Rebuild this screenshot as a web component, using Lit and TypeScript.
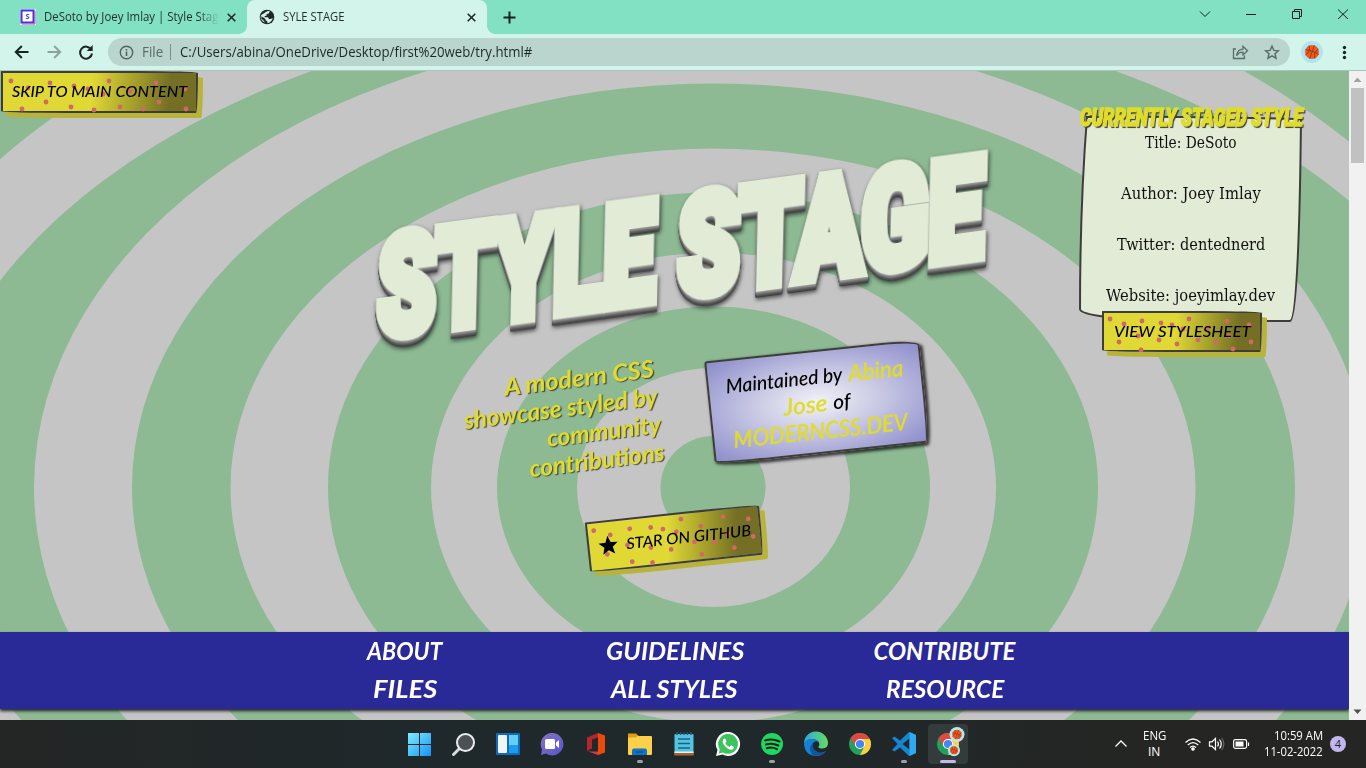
import { LitElement, html, css, svg } from "lit";
import { customElement, property } from "lit/decorators.js";
import { styleMap } from "lit/directives/style-map.js";

/** One line of text, condensed or stretched to a given width. */
@customElement("fit-text")
class FitText extends LitElement {
  @property({ type: Number }) w = 100;
  static styles = css`
    :host { display: inline-block; white-space: nowrap; flex: none; text-align: left; }
    .t { display: inline-block; transform-origin: 0 50%; white-space: pre; }
  `;
  render() {
    return html`<span class="t"><slot></slot></span>`;
  }
  firstUpdated() {
    const t = this.renderRoot.querySelector(".t") as HTMLElement;
    const natural = t.offsetWidth;
    this.style.width = this.w + "px";
    if (natural) t.style.transform = `scaleX(${this.w / natural})`;
  }
}

/** Yellow comic button with sprinkled dots. */
@customElement("comic-button")
class ComicButton extends LitElement {
  @property({ type: Number }) w = 100;
  @property({ type: Number }) h = 40;
  @property({ attribute: false }) dots: number[][] = [];
  static styles = css`
    :host { display: inline-block; }
    .btn {
      position: relative; box-sizing: border-box; display: flex; align-items: center; justify-content: center;
      padding-bottom: 2px; border: 2px solid #413c3c;
      border-radius: 1px 90px 3px 100px / 1px 3px 60px 3px;
      background: linear-gradient(95deg, #dfd835 0%, #dfd835 46%, #746f24 86%);
      box-shadow: 5px 5px 0 #b8b339;
      font: italic 500 15.5px/20px Lato, "Open Sans", sans-serif; color: #000;
    }
    .dots { position: absolute; left: -2px; top: -2px; }
    .label { position: relative; display: flex; align-items: center; gap: 8px; }
  `;
  render() {
    return html`<div class="btn" style=${styleMap({ width: this.w + "px", height: this.h + "px" })}>
      <svg class="dots" width=${this.w} height=${this.h}>
        ${this.dots.map(([x, y]) => svg`<circle cx=${x} cy=${y} r="2.4" fill="#cf6a66"></circle>`)}
      </svg>
      <span class="label"><slot></slot></span>
    </div>`;
  }
}

const SKIP_DOTS = [[10, 10], [21, 38], [27, 17], [45, 31], [49, 12], [70, 36], [73, 15], [87, 18], [93, 39], [102, 23], [108, 10], [119, 36], [129, 20], [142, 38], [155, 12], [158, 31], [184, 18], [185, 38]];
const VIEW_DOTS = [[8, 8], [22, 13], [40, 10], [59, 12], [70, 14], [87, 8], [81, 18], [106, 17], [125, 10], [147, 14], [36, 25], [17, 31], [57, 29], [75, 33], [39, 39], [96, 29], [114, 31], [127, 25], [131, 38], [149, 31]];
const STAR_DOTS = [[8, 9], [24, 15], [44, 11], [65, 12], [77, 15], [90, 19], [96, 7], [115, 16], [138, 9], [163, 14], [19, 34], [43, 44], [40, 27], [63, 32], [83, 36], [107, 31], [127, 33], [141, 26], [166, 32], [146, 41], [113, 44], [63, 47]];

/* Rings of the backdrop: centre x, radius x, radius y, outermost first. */
const RINGS = [
  [685, 852, 552], [713.5, 789, 484], [701.5, 667.5, 457], [713.5, 581.5, 404], [713, 482.5, 339],
  [713, 385, 295], [713.5, 282.5, 235], [713.5, 216.5, 181], [713.5, 136.5, 119.5], [713, 52.5, 51.5],
];

const NAV = [["ABOUT", 75], ["GUIDELINES", 138], ["CONTRIBUTE", 142], ["FILES", 64], ["ALL STYLES", 127], ["RESOURCE", 118]] as const;

const ball = (cx: number, cy: number, r: number, halo: number, haloColor: string) => svg`
  <circle cx=${cx} cy=${cy} r=${halo} fill=${haloColor}></circle>
  <circle cx=${cx} cy=${cy} r=${r} fill="#f4571c"></circle>
  <g transform="translate(${cx} ${cy}) rotate(20) scale(${r / 7})" stroke="#8a3a12" stroke-width=".8" fill="none">
    <path d="M0-7V7M-7 0Q0-2 7 0M-5-5Q-1 0-5 5M5-5Q1 0 5 5"></path>
  </g>`;

const chrome = () => svg`
  <circle r="11" fill="#23a05a"></circle>
  <path d="M0-5H9.800A11 11 0 0 1 0 11L4.500 2.500Z" fill="#fdcf41"></path>
  <path d="M-9.530-5.500A11 11 0 0 1 9.800-5L0-5-4.400 2.500Z" fill="#dc4b3e"></path>
  <circle r="5.100" fill="#fff"></circle><circle r="4.100" fill="#4487f2"></circle>`;

const icon = (body: unknown, mark = "") => html`<div class="task ${mark}"><svg width="40" height="40" viewBox="-20 -20 40 40">${body}</svg></div>`;

@customElement("app-root")
class AppRoot extends LitElement {
  static styles = css`
    :host { display: flex; flex-direction: column; width: 1366px; height: 768px; overflow: hidden; font-family: "Open Sans", "Noto Sans", sans-serif; }
    * { box-sizing: border-box; }
    h1, h2, p { margin: 0; font-weight: inherit; }
    svg { display: block; flex: none; }

    .tabs { height: 34px; background: #82e0c3; display: flex; flex: none; font-size: 12px; line-height: 34px; color: #1f2d2a; }
    .tab { display: flex; align-items: center; width: 247px; padding-left: 20px; gap: 8px; }
    .tab .name { flex: none; width: 175px; overflow: hidden; -webkit-mask-image: linear-gradient(90deg, #000 88%, transparent 100%); height: 34px; }
    .active { position: relative; width: 240px; padding-left: 12px; background: #d2f4ea; border-radius: 8px 8px 0 0; }
    .active .name { -webkit-mask-image: none; width: 176px; }
    .active::before, .active::after { content: ""; position: absolute; bottom: 0; width: 8px; height: 8px; }
    .active::before { left: -8px; background: radial-gradient(circle at 0 0, transparent 7.5px, #d2f4ea 8px); }
    .active::after { right: -8px; background: radial-gradient(circle at 100% 0, transparent 7.5px, #d2f4ea 8px); }
    .plus { align-self: center; margin-left: 16px; }
    .win { margin-left: auto; }

    .bar { height: 37px; flex: none; background: #d2f4ea; border-bottom: 1px solid #a9c4bc; display: flex; align-items: center; }
    .navicons { width: 108px; }
    .omni { width: 1182px; height: 28px; border-radius: 14px; background: #b9d5cd; display: flex; align-items: center; padding: 0 10px 0 11px; font-size: 14px; line-height: 28px; color: #1d2927; }
    .file { margin-left: 8px; color: #5b6a66; }
    .sep { width: 1px; height: 16px; background: #7b8e88; margin: 0 9px 0 7px; }
    .omni .right { margin-left: auto; }

    .view { display: flex; height: 649px; flex: none; }
    .page { position: relative; width: 1349px; height: 649px; overflow: hidden; background: #8db993; display: flex; flex-direction: column; }
    .rings { position: absolute; left: 0; top: 0; }
    .top { position: relative; height: 561px; flex: none; display: grid; grid-template-columns: 360px 646px 73px 225px; }
    .skip { margin: 0 0 0 1px; }

    .hero { display: flex; flex-direction: column; align-items: center; }
    .title {
      margin: 121px 6px 0 0; height: 112px; width: 611px; display: flex; justify-content: space-between;
      font: 900 138px/114px Roboto, sans-serif; color: #e1ebd6; -webkit-text-stroke: 13px #e1ebd6;
      transform: rotate(-7.7deg) skewX(-9deg);
      filter: drop-shadow(.6px 1px 0 #999) drop-shadow(.4px 1px 0 #858585) drop-shadow(.4px 1px 0 #707070) drop-shadow(.4px 1px 0 #5c5c5c) drop-shadow(.4px 1px 0 #4c4c4c) drop-shadow(.4px 1px 0 #404040) drop-shadow(1px 2px 2px rgba(0, 0, 0, .6));
    }
    .pair { display: flex; width: 100%; padding: 48px 0 0 102px; gap: 49px; }
    .tag {
      width: 198px; height: 113px; margin-top: 14px; display: flex; flex-direction: column; align-items: flex-end;
      font: italic 700 24px/28px Lato, sans-serif; color: #dfdc2b; text-shadow: 1px 1px 1px #444; transform: rotate(-7.2deg);
    }
    .maint {
      width: 216px; height: 104px; margin: -2px 0 0; padding-top: 11px; border: 2px solid #413c3c; transform: rotate(-6deg);
      border-radius: 3px 40px 4px 60px / 3px 6px 60px 4px;
      background: radial-gradient(ellipse at center, #f2f2f8 0%, #c9c9e4 42%, #8b8bcb 100%);
      box-shadow: 2px 2px 3px 1px rgba(0, 0, 0, .7);
      font: italic 500 20px/27px Lato, sans-serif; color: #000; display: flex; flex-direction: column; align-items: center;
    }
    .maint .row { display: flex; gap: 6px; }
    .maint .y { color: #dfdc2b; font-size: 23px; -webkit-text-stroke: .3px #dfdc2b; }
    .star { margin-top: 34px; margin-right: 18px; transform: rotate(-6.2deg); }

    .staged { grid-column: 4; position: relative; display: flex; flex-direction: column; align-items: center; padding-top: 34px; }
    .sheet { position: absolute; left: 0; top: 42px; }
    .staged h2 { position: relative; height: 26px; font: italic 900 25px/26px Roboto, sans-serif; color: #dfdc2b; -webkit-text-stroke: 1.6px #dfdc2b; text-shadow: 2px 2px 1px #413c3c; }
    .staged p { position: relative; height: 51px; font: 16.5px/24px "DejaVu Serif", serif; color: #111; left: -1px; }
    .staged .lines { height: 180px; }
    .viewbtn { position: relative; margin-right: 19px; }

    nav { position: relative; height: 77px; flex: none; background: #292998; box-shadow: 0 2px 3px #222; display: grid; grid-template-columns: repeat(3, 270px); grid-auto-rows: 38px; justify-content: center; justify-items: center; font: italic 700 24px/38px Lato, sans-serif; color: #fff; }

    .scroll { width: 17px; background: #f1f1f1; display: flex; flex-direction: column; align-items: center; }
    .thumb { width: 13px; height: 75px; background: #c1c1c1; }
    .scroll .down { margin-top: auto; }

    .taskbar { height: 48px; flex: none; background: linear-gradient(90deg, #242625, #1f282b 30%, #1f282b 55%, #252623 85%); display: grid; grid-template-columns: 398px 572px 1fr; color: #fff; }
    .apps { grid-column: 2; display: flex; }
    .task { position: relative; width: 44px; height: 48px; padding: 4px 2px; }
    .task.run::after, .task.on::after { content: ""; position: absolute; left: 19px; bottom: 5px; width: 6px; height: 3px; border-radius: 2px; background: #9da2a3; }
    .task.on::after { width: 16px; left: 14px; background: #c3b8ee; }
    .task.on svg { background: #343b3d; border-radius: 4px; }
    .tray { display: flex; align-items: center; padding-left: 143px; font-size: 12px; line-height: 16px; }
    .lang { width: 24px; margin: 0 18px 0 13px; display: flex; flex-direction: column; align-items: center; }
    .clock { width: 60px; margin-left: 13px; display: flex; flex-direction: column; align-items: flex-end; }
    .count { margin-left: 7px; width: 16px; height: 16px; border-radius: 8px; background: #c3b8ee; color: #222; text-align: center; font-size: 11px; line-height: 16px; }
  `;

  private tabStrip() {
    return html`<div class="tabs">
      <div class="tab">
        <svg width="16" height="16"><rect width="16" height="16" fill="#eef"></rect><rect x="1.5" y="1.5" width="12" height="12" fill="#fff" stroke="#4433e0" stroke-width="2"></rect><path d="M15 2V15H2" fill="none" stroke="#b65aa0"></path><text x="5.4" y="10.4" font-size="7" font-weight="700" fill="#4433e0">S</text></svg>
        <div class="name"><fit-text w="174">DeSoto by Joey Imlay | Style Stag</fit-text></div>
        <svg width="9" height="9"><path d="M.7.7 8.3 8.3M8.3.7.7 8.3" stroke="#1b2a27" stroke-width="1.6"></path></svg>
      </div>
      <div class="tab active">
        <svg width="16" height="16"><circle cx="8" cy="8" r="7.3" fill="#1f2624"></circle><path d="M8.6 1.900 10.800 2.300 9.800 4.500 7.600 5 7.500 6.800 5.600 7 5.800 8.300H9L10 10H12L13.600 8.800 13.200 10.800 11.200 13.200 8.300 14.200 8.400 12.400 6.600 11.300 6.200 9.700 2.300 7.200 2.400 9.400 4.500 11.600 6.200 13.700 3.900 12.600Q.5 9 2.200 6Z" fill="#d2f4ea" fill-rule="evenodd"></path></svg>
        <div class="name"><fit-text w="62">SYLE STAGE</fit-text></div>
        <svg width="9" height="9"><path d="M.7.7 8.3 8.3M8.3.7.7 8.3" stroke="#1b2a27" stroke-width="1.6"></path></svg>
      </div>
      <svg class="plus" width="13" height="13"><path d="M6.5.5V12.5M.5 6.500H12.500" stroke="#17211f" stroke-width="2"></path></svg>
      <svg class="win" width="176" height="34" viewBox="1190 0 176 34" fill="none" stroke="#12201d">
        <path d="M1200 11.500 1205 16.500 1210 11.500"></path><path d="M1246 14.500H1256"></path>
        <path d="M1292.500 11.500H1299.500V18.500H1292.500ZM1294.500 11V9.500H1301.500V16.500H1300"></path>
        <path d="M1338 9.500 1348 19M1348 9.500 1338 19"></path>
      </svg>
    </div>`;
  }

  private toolbar() {
    return html`<div class="bar">
      <svg class="navicons" height="36" viewBox="0 34 108 36" fill="none" stroke-width="2">
        <path d="M28.500 52H16M21.800 46 15.800 52 21.800 58" stroke="#1a2422"></path>
        <path d="M47.500 52H60M54.200 46 60.200 52 54.200 58" stroke="#8ba39c"></path>
        <path d="M91.200 49.500A6 6 0 1 0 92 53.500" stroke="#1a2422"></path><path d="M92.700 45V51H86.700Z" fill="#1a2422"></path>
      </svg>
      <div class="omni">
        <svg width="15" height="15" fill="none" stroke="#53635e"><circle cx="7.500" cy="7.500" r="6.200" stroke-width="1.400"></circle><path d="M7.500 6.500V11M7.500 4V5.500" stroke-width="1.600"></path></svg>
        <fit-text class="file" w="21">File</fit-text><span class="sep"></span>
        <fit-text w="352">C:/Users/abina/OneDrive/Desktop/first%20web/try.html#</fit-text>
        <svg class="right" width="50" height="18" viewBox="1230 43 50 18" fill="none" stroke="#5b6d67" stroke-width="1.300">
          <path d="M1236 49H1233.500V58.500H1244.500V55.500"></path>
          <path d="M1236.500 55.500Q1237.500 49.500 1243 49.200V46.300L1247.500 50.800 1243 55V52.200Q1239 52 1236.500 55.500Z"></path>
          <path d="M1272 46.200 1273.900 50.400 1278.300 50.800 1275 53.800 1276 58.200 1272 55.900 1268 58.200 1269 53.800 1265.700 50.800 1270.100 50.400Z" stroke-width="1.500"></path>
        </svg>
      </div>
      <svg width="76" height="36" viewBox="1290 34 76 36">
        ${ball(1312, 52, 7, 11, "#ade6ee")}
        <circle cx="1344.500" cy="47.500" r="1.700" fill="#1a2422"></circle><circle cx="1344.500" cy="52.500" r="1.700" fill="#1a2422"></circle><circle cx="1344.500" cy="57.500" r="1.700" fill="#1a2422"></circle>
      </svg>
    </div>`;
  }

  private page() {
    return html`<div class="page">
      <svg class="rings" width="1349" height="649" viewBox="0 71 1349 649">
        ${RINGS.map(([cx, rx, ry], i) => svg`<ellipse cx=${cx} cy="487.500" rx=${rx} ry=${ry} fill=${i % 2 ? "#8db993" : "#c5c5c5"}></ellipse>`)}
      </svg>
      <div class="top">
        <div class="skip"><comic-button w="197" h="42" .dots=${SKIP_DOTS}><fit-text w="175">SKIP TO MAIN CONTENT</fit-text></comic-button></div>
        <div class="hero">
          <h1 class="title"><fit-text w="280">STYLE</fit-text><fit-text w="308">STAGE</fit-text></h1>
          <div class="pair">
            <div class="tag">
              <fit-text w="151">A modern CSS</fit-text><fit-text w="195">showcase styled by</fit-text>
              <fit-text w="115">community</fit-text><fit-text w="136">contributions</fit-text>
            </div>
            <div class="maint">
              <div class="row"><fit-text w="117">Maintained by</fit-text><fit-text class="y" w="55">Abina</fit-text></div>
              <div class="row"><fit-text class="y" w="44">Jose</fit-text><fit-text w="18">of</fit-text></div>
              <div class="row"><fit-text class="y" w="175">MODERNCSS.DEV</fit-text></div>
            </div>
          </div>
          <div class="star"><comic-button w="175" h="51" .dots=${STAR_DOTS}>
            <svg width="20" height="20"><path d="M10 .5 12.600 7.200 19.600 7.500 14.200 12 16 19 10 15.100 4 19 5.800 12 .4 7.500 7.400 7.200Z"></path></svg>
            <fit-text w="125">STAR ON GITHUB</fit-text></comic-button></div>
        </div>
        <div class="staged">
          <svg class="sheet" width="225" height="212" viewBox="1079 113 225 212"><path d="M1087 117C1082 180 1080 260 1080 309C1080 315 1115 320 1180 321H1290C1297 321 1300 220 1301 119C1250 118 1180 116 1087 117Z" fill="#e1ebd6" stroke="#413c3c" stroke-width="2"></path></svg>
          <h2><fit-text w="223">CURRENTLY STAGED STYLE</fit-text></h2>
          <div class="lines">
            ${([["Title: DeSoto", 92], ["Author: Joey Imlay", 140], ["Twitter: dentednerd", 148], ["Website: joeyimlay.dev", 169]] as const).map(
              ([t, w]) => html`<p align="center"><fit-text w=${w}>${t}</fit-text></p>`)}
          </div>
          <div class="viewbtn"><comic-button w="160" h="41" .dots=${VIEW_DOTS}><fit-text w="137">VIEW STYLESHEET</fit-text></comic-button></div>
        </div>
      </div>
      <nav>${NAV.map(([t, w]) => html`<fit-text w=${w}>${t}</fit-text>`)}</nav>
    </div>
    <div class="scroll">
      <svg width="17" height="17"><path d="M4.500 11 8.500 6.500 12.500 11Z" fill="#a3a3a3"></path></svg>
      <div class="thumb"></div>
      <svg class="down" width="17" height="17"><path d="M4.500 6.500 8.500 11 12.500 6.500Z" fill="#505050"></path></svg>
    </div>`;
  }

  private taskbar() {
    return html`<div class="taskbar">
      <div class="apps">
        ${icon(svg`<defs><linearGradient id="wn" gradientUnits="userSpaceOnUse" x1="-11" y1="-11" x2="12" y2="12"><stop stop-color="#7cebfc"></stop><stop offset="1" stop-color="#1390f5"></stop></linearGradient></defs><path d="M-12-11H-1V0H-12ZM0-11H11V0H0ZM-12 1H-1V12H-12ZM0 1H11V12H0Z" fill="url(#wn)"></path>`)}
        ${icon(svg`<path d="M-4 4-10.500 10.500" stroke="#d9dbdc" stroke-width="3" stroke-linecap="round"></path><circle cx="1.500" cy="-1.500" r="8.500" fill="#4b5154" stroke="#eceded" stroke-width="2"></circle>`)}
        ${icon(svg`<rect x="-12" y="-11" width="24" height="22" rx="1" fill="#0f6cbd"></rect><rect x="-10" y="-9" width="9" height="18" rx="1" fill="#f3f3f3"></rect><rect x="1" y="-9" width="9" height="10" fill="#67cffb"></rect><rect x="1" y="1" width="9" height="8" fill="#1b9df0"></rect>`)}
        ${icon(svg`<defs><linearGradient id="tm" x1="0" y1="0" x2="1" y2="1"><stop stop-color="#8d6fc9"></stop><stop offset="1" stop-color="#5059c9"></stop></linearGradient></defs><path d="M0-11A11.200 11.200 0 1 1-6 9.500L-11 11-10 5.500A11.200 11.200 0 0 1 0-11Z" fill="url(#tm)"></path><rect x="-7" y="-5" width="10" height="10" rx="1.500" fill="#fff"></rect><path d="M4-1.500 7-4V4L4 1.500Z" fill="#fff"></path>`)}
        ${icon(svg`<path d="M2-11-9-6.500V7L-4 4.500V-4.500L2-6.500Z" fill="#b3262b"></path><path d="M2-11 9-8.500V8.500L2 11Z" fill="#ea4a0c"></path><path d="M-8 7.500 2 11V7.500Z" fill="#e0334c"></path>`)}
        ${icon(svg`<path d="M-12-10.500H-4L-1.500-8V-4H-12Z" fill="#dfa010"></path><rect x="-12" y="-8" width="24" height="19" rx="1" fill="#fdd04a"></rect><path d="M-12-6.500H-4L-1.500-9H-12Z" fill="#dfa010"></path><path d="M-8 11V6.500Q-8 4.500-6 4.500H5Q7 4.500 7 6.500V11Z" fill="#1073c6"></path><path d="M-4 8H3" stroke="#0b5596" stroke-width="1.500"></path>`, "run")}
        ${icon(svg`<rect x="-9.500" y="-10" width="19" height="21" rx="1" fill="#55c3e0"></rect><path d="M-9.500 9H9.500V11.500H-9.500Z" fill="#a8622d"></path><path d="M-9.500 7.500H9.500V9H-9.500Z" fill="#eee"></path><path d="M-6-5H6M-6-.500H6M-6 4H6" stroke="#11678a" stroke-width="1.700"></path><path d="M-7-12V-9M-3.500-12V-9M0-12V-9M3.500-12V-9M7-12V-9" stroke="#1b5c78" stroke-width="1.500"></path>`)}
        ${icon(svg`<path d="M0-12A12 12 0 1 1-5.500 10.600L-12 12-10.500 6A12 12 0 0 1 0-12Z" fill="#fff"></path><path d="M.2-10A9.900 9.900 0 1 1-5 8.400L-9.300 9.500-8.200 5.300A9.900 9.900 0 0 1 .2-10Z" fill="#3dc35c"></path><path d="M-3.800-5.500Q-6.500-3.500-4.500.200-1.500 5 3 5.800 6 5.800 6 3L3 1.300 1.300 3Q-1.500 1.800-2.700-.800L-1.500-2.300-2.600-5.300Z" fill="#fff"></path>`)}
        ${icon(svg`<circle r="11" fill="#1ed760"></circle><path d="M-7-3.500Q0-6 7.500-2.500M-6 .500Q0-1.500 6.300 1.500M-5.300 4.300Q0 2.500 5 5.200" fill="none" stroke="#10251a" stroke-width="2" stroke-linecap="round"></path>`, "run")}
        ${icon(svg`<defs><linearGradient id="eg"><stop stop-color="#2ba7e0"></stop><stop offset="1" stop-color="#66dd5c"></stop></linearGradient></defs><path d="M-12 0A12 12 0 0 1 12-1Q12 4 6.500 4.500 2 4.500 2.500 2.500 4 1 3-1.500 1-5-4-5-10-4.500-12 0Z" fill="url(#eg)"></path><path d="M-12 0Q-10-5-4-5 1-5 3-1.500 0-4-3-1-6 4-1 8 4 11 10 7 6 12 0 12-11 11.500-12 0Z" fill="#1481d6"></path><path d="M-3-1Q-9 4-3 11.600 6 13 10 7 4 10 0 7-4 4-3-1Z" fill="#12559f"></path>`)}
        ${icon(chrome())}
        ${icon(svg`<path d="M5-12 12-9V9L5 12-4 3.500-9.500 7.500-12 6-6.500 0-12-6-9.500-7.500-4-3.500ZM5.500-5.500-1.500 0 5.500 5.500Z" fill="#1585d2" fill-rule="evenodd"></path><path d="M5.500-12 12-9V9L5.500 12Z" fill="#2fa8f2"></path>`, "run")}
        ${icon(svg`${chrome()}${ball(9, -9.500, 4.800, 7.500, "#b9e8f0")}${ball(6, 6.200, 4, 6, "#b9e8f0")}`, "on")}
      </div>
      <div class="tray">
        <svg width="16" height="12" fill="none" stroke="#fff" stroke-width="1.300"><path d="M2.500 8.500 8 3 13.500 8.500"></path></svg>
        <div class="lang"><fit-text w="23">ENG</fit-text><fit-text w="12">IN</fit-text></div>
        <svg width="66" height="18" viewBox="1184 735 66 18" fill="none" stroke="#fff" stroke-width="1.200">
          <path d="M1185.500 742.500Q1193 735.500 1200.500 742.500M1187.800 745Q1193 740.200 1198.200 745M1190 747.500Q1193 744.700 1196 747.500"></path><circle cx="1193" cy="749" r="1.200" fill="#fff"></circle>
          <path d="M1209.500 741.800H1212L1215.500 738.500V749.500L1212 746.200H1209.500Z"></path><path d="M1217.500 741.500Q1219.500 744 1217.500 746.500M1219.500 739.500Q1223 744 1219.500 748.500"></path><path d="M1221.700 738Q1226 744 1221.700 750" stroke="#666"></path>
          <rect x="1233.600" y="739.600" width="13" height="8.800" rx="1.800"></rect><rect x="1235.500" y="741.500" width="8" height="5" fill="#fff" stroke="none"></rect><path d="M1248.500 742.500V746"></path>
        </svg>
        <div class="clock"><fit-text w="49">10:59 AM</fit-text><fit-text w="59">11-02-2022</fit-text></div>
        <div class="count">4</div>
      </div>
    </div>`;
  }

  render() {
    return html`${this.tabStrip()}${this.toolbar()}<div class="view">${this.page()}</div>${this.taskbar()}`;
  }
}
